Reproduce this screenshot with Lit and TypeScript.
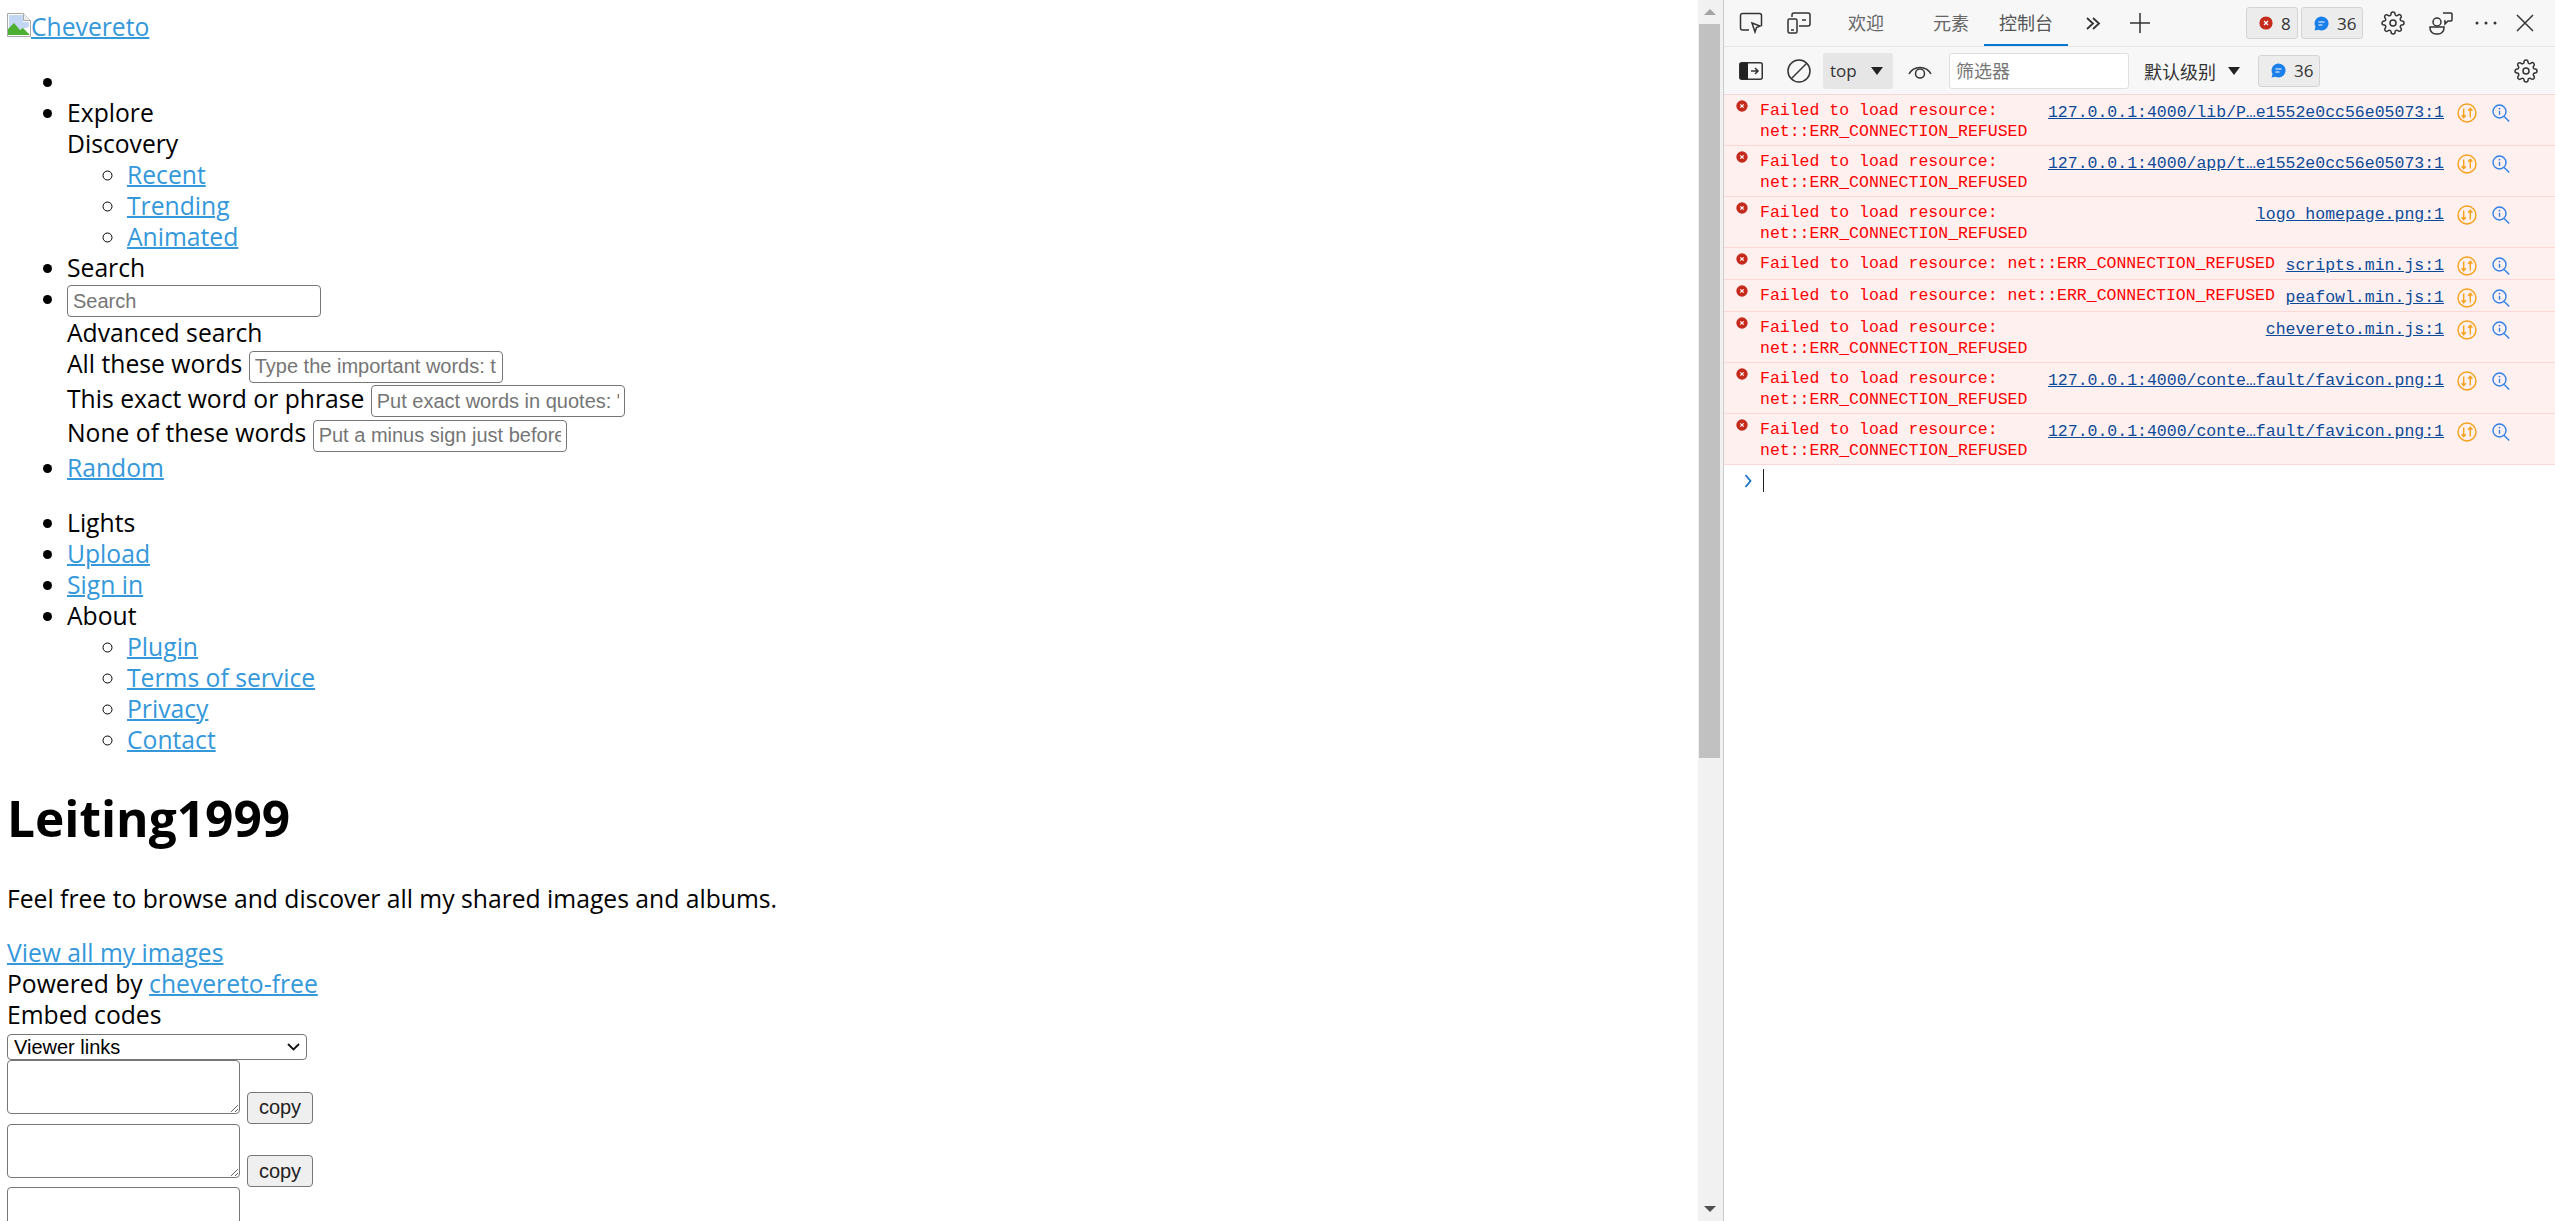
import { LitElement, html, css, svg } from "lit";
import { customElement } from "lit/decorators.js";

const gear = svg`<path d="M12 15a3 3 0 1 0 0-6 3 3 0 0 0 0 6z"/><path d="M19.4 15a1.65 1.65 0 0 0 .33 1.82l.06.06a2 2 0 0 1 0 2.83 2 2 0 0 1-2.83 0l-.06-.06a1.65 1.65 0 0 0-1.82-.33 1.65 1.65 0 0 0-1 1.51V21a2 2 0 0 1-2 2 2 2 0 0 1-2-2v-.09A1.65 1.65 0 0 0 9 19.4a1.65 1.65 0 0 0-1.82.33l-.06.06a2 2 0 0 1-2.83 0 2 2 0 0 1 0-2.83l.06-.06a1.65 1.65 0 0 0 .33-1.82 1.65 1.65 0 0 0-1.51-1H3a2 2 0 0 1-2-2 2 2 0 0 1 2-2h.09A1.65 1.65 0 0 0 4.6 9a1.65 1.65 0 0 0-.33-1.82l-.06-.06a2 2 0 0 1 0-2.83 2 2 0 0 1 2.83 0l.06.06a1.65 1.65 0 0 0 1.82.33H9a1.65 1.65 0 0 0 1-1.51V3a2 2 0 0 1 2-2 2 2 0 0 1 2 2v.09a1.65 1.65 0 0 0 1 1.51 1.65 1.65 0 0 0 1.82-.33l.06-.06a2 2 0 0 1 2.83 0 2 2 0 0 1 0 2.83l-.06.06a1.65 1.65 0 0 0-.33 1.82V9a1.65 1.65 0 0 0 1.51 1H21a2 2 0 0 1 2 2 2 2 0 0 1-2 2h-.09a1.65 1.65 0 0 0-1.51 1z"/>`;

const ic = (w: number, h: number, body: unknown) => html`<svg class="ic" width=${w} height=${h} viewBox="0 0 ${w} ${h}" fill="none" stroke="#333" stroke-width="1.5">${body}</svg>`;
const iGear = html`<svg class="ic" width="24" height="24" viewBox="0 0 24 24" fill="none" stroke="#333" stroke-width="1.5">${gear}</svg>`;
const iErr = (s: number) => html`<svg class="ic" width=${s} height=${s} viewBox="0 0 14 14"><circle cx="7" cy="7" r="6.6" fill="#c42b1c"/><path d="M5 5l4 4M9 5l-4 4" stroke="#fff" stroke-width="1.3"/></svg>`;
const iMsg = html`<svg class="ic" width="15" height="15" viewBox="0 0 15 15"><path d="M7.5.5a7 7 0 1 1-3 13.3L.6 14.6l.9-3.6A7 7 0 0 1 7.5.5z" fill="#1a7fe8"/><path d="M4.5 6h6M4.5 9h4" stroke="#fff" stroke-width="1.2"/></svg>`;
const iNet = html`<svg class="ic" width="20" height="20" viewBox="0 0 20 20" fill="none" stroke="#f7a11a" stroke-width="1.4"><circle cx="10" cy="10" r="9"/><path d="M6.7 5.5v9M4.6 12.2l2.1 2.4 2.1-2.4M13.3 14.5v-9M11.2 7.8l2.1-2.4 2.1 2.4"/></svg>`;
const iLens = html`<svg class="ic" width="18" height="19" viewBox="0 0 18 19" fill="none" stroke="#2f80e8" stroke-width="1.4"><circle cx="7.5" cy="7.5" r="6.5"/><path d="M12.2 12.4l5 5.2"/><path d="M7.5 6.8v4" /><circle cx="7.5" cy="4.6" r=".9" fill="#2f80e8" stroke="none"/></svg>`;

const rows = [
  "127.0.0.1:4000/lib/P…e1552e0cc56e05073:1",
  "127.0.0.1:4000/app/t…e1552e0cc56e05073:1",
  "logo_homepage.png:1",
  "scripts.min.js:1",
  "peafowl.min.js:1",
  "chevereto.min.js:1",
  "127.0.0.1:4000/conte…fault/favicon.png:1",
  "127.0.0.1:4000/conte…fault/favicon.png:1",
];

@customElement("app-root")
export class AppRoot extends LitElement {
  static styles = css`
    :host { display: flex; width: 2555px; height: 1221px; overflow: hidden; background: #fff; }
    .page { width: 1698px; height: 1221px; flex: none; overflow: hidden; box-sizing: border-box; padding: 10.5px 0 0 7px;
      font: 24.7px/31px "Open Sans", sans-serif; color: #000; }
    a { color: #3498db; text-decoration: underline; text-decoration-thickness: 2px; }
    .logo svg { vertical-align: -1px; margin-right: 0; }
    ul { margin: 24px 0; padding: 0 0 0 60px; }
    ul ul { margin: 0; list-style: circle; }
    li { min-height: 31px; }
    input, select, textarea, button { font: 20px "Liberation Sans", sans-serif; box-sizing: border-box; }
    input { width: 254px; height: 32px; border: 1.5px solid #767676; border-radius: 4px; padding: 1px 5px; vertical-align: baseline; margin: 0; }
    input::placeholder { color: #757575; }
    h1 { font-size: 49.6px; line-height: 66px; font-weight: 700; margin: 30px 0 0; }
    p { margin: 32.5px 0 22.5px; }
    .embed { padding-top: 4.5px; }
    .selwrap { position: relative; width: 300px; height: 26px; }
    .selwrap svg { position: absolute; right: 7px; top: 9px; pointer-events: none; }
    .embed select { display: block; appearance: none; width: 300px; height: 26px; border: 1.5px solid #767676; border-radius: 4px; background: #fff; padding: 0 0 0 6px; font-size: 20px; color: #000; }
    .ta { height: 63.5px; white-space: nowrap; }
    textarea { width: 233px; height: 54px; border: 1.5px solid #767676; border-radius: 4px; margin: 0 7px 0 0; padding: 3px; display: inline-block; vertical-align: baseline; }
    button { width: 66px; height: 32px; background: #efefef; border: 1.5px solid #767676; border-radius: 4px; padding: 0; color: #222; }
    .scroll { width: 26px; flex: none; height: 1221px; box-sizing: border-box; background: #f1f1f1; border-right: 1px solid #ccc; display: flex; flex-direction: column; align-items: center; padding: 9px 2px 9px 0; }
    .thumb { width: 21px; height: 734px; background: #c1c1c1; margin-top: 9px; }
    .arr { width: 0; height: 0; border-left: 6px solid transparent; border-right: 6px solid transparent; }
    .arr.up { border-bottom: 6px solid #a3a3a3; }
    .arr.dn { border-top: 6px solid #505050; margin-top: auto; }
    .dev { flex: 1; min-width: 0; display: flex; flex-direction: column; font: 18px "Open Sans", "Noto Sans CJK SC", sans-serif; color: #333; background: #fff; }
    .ic { flex: none; display: block; }
    .bar { height: 47px; flex: none; box-sizing: border-box; display: flex; align-items: center; background: #f7f7f7; }
    .bar1 { padding-left: 15px; border-bottom: 1px solid #e6e6e6; }
    .bar2 { padding-left: 15px; height: 48px; border-bottom: 1px solid #f5d5d8; }
    .tab { color: #666; line-height: 47px; position: relative; white-space: nowrap; }
    .tab.on { color: #555; }
    .tab.on::after { content: ""; position: absolute; left: -15px; right: -15px; bottom: 1px; height: 2px; background: #0078d4; }
    .badge { height: 32px; box-sizing: border-box; display: flex; align-items: center; gap: 8px; padding: 0 9px 0 12px; background: #ececec; border: 1px solid #d4d4d4; border-radius: 3px; font-size: 17px; }
    .sel { width: 70px; height: 36px; box-sizing: border-box; background: #e6e6e6; border-radius: 3px; display: flex; align-items: center; padding-left: 7px; color: #333; font-size: 17px; }
    .tri { width: 0; height: 0; border-left: 6.5px solid transparent; border-right: 6.5px solid transparent; border-top: 8px solid #222; }
    .filter { width: 180px; height: 36px; box-sizing: border-box; background: #fff; border: 1px solid #e0e0e0; border-radius: 3px; padding-left: 6px; line-height: 34px; color: #777; }
    .row { display: flex; align-items: flex-start; background: #fff0f0; border-bottom: 1px solid #ffd6d6; padding: 5px 0 3px 12px; min-height: 32px; box-sizing: border-box; font: 16.5px/21px "Liberation Mono", monospace; flex: none; }
    .row .e { margin: 0 12px 0 0; }
    .msg { flex: 1; min-width: 0; color: #f00; }
    .src { flex: none; color: #0b4a99; text-decoration: underline; margin-top: 2px; margin-left: 6px; white-space: nowrap; font-size: 16.5px; }
    .row .n { margin: 3px 0 0 13px; }
    .row .l { margin: 4px 45px 0 15px; }
    .prompt { display: flex; align-items: center; padding: 3px 0 0 20px; height: 28px; box-sizing: border-box; gap: 11px; }
    .caret { width: 1px; height: 23px; background: #222; }
  `;

  render() {
    return html`
      <div class="page">
        <div class="logo"><a href="#"><svg width="24" height="24" viewBox="0 0 24 24"><path d="M.5.5h16l7 7v16H.5z" fill="#fff" stroke="#a9a9a9"/><path d="M2 2h14v7h6v5L2 20z" fill="#c3d6f3"/><path d="M1 22V16l6-6 6 7 3-2 7 7z" fill="#4caf32"/><path d="M16.5.5v7h7" fill="#eee" stroke="#a9a9a9"/></svg>Chevereto</a></div>
        <ul>
          <li></li>
          <li>Explore<div>Discovery</div>
            <ul><li><a href="#">Recent</a></li><li><a href="#">Trending</a></li><li><a href="#">Animated</a></li></ul>
          </li>
          <li>Search</li>
          <li><input placeholder="Search" />
            <div>Advanced search</div>
            <div>All these words <input placeholder="Type the important words: tree house" /></div>
            <div>This exact word or phrase <input placeholder='Put exact words in quotes: "tree house"' /></div>
            <div>None of these words <input placeholder="Put a minus sign just before words: -tree" /></div>
          </li>
          <li><a href="#">Random</a></li>
        </ul>
        <ul>
          <li>Lights</li>
          <li><a href="#">Upload</a></li>
          <li><a href="#">Sign in</a></li>
          <li>About
            <ul><li><a href="#">Plugin</a></li><li><a href="#">Terms of service</a></li><li><a href="#">Privacy</a></li><li><a href="#">Contact</a></li></ul>
          </li>
        </ul>
        <h1>Leiting1999</h1>
        <p>Feel free to browse and discover all my shared images and albums.</p>
        <div><a href="#">View all my images</a></div>
        <div>Powered by <a href="#">chevereto-free</a></div>
        <div>Embed codes</div>
        <div class="embed">
          <div class="selwrap"><select><option>Viewer links</option></select><svg width="13" height="8" viewBox="0 0 13 8" fill="none" stroke="#111" stroke-width="1.8"><path d="M1 1l5.500 5.500L12 1"/></svg></div>
          <div class="ta"><textarea></textarea><button>copy</button></div>
          <div class="ta"><textarea></textarea><button>copy</button></div>
          <div class="ta"><textarea></textarea></div>
        </div>
      </div>
      <div class="scroll"><div class="arr up"></div><div class="thumb"></div><div class="arr dn"></div></div>
      <div class="dev">
        <div class="bar bar1">
          ${ic(24, 22, svg`<path d="M10 18H3.5A2 2 0 0 1 1.5 16V3.5A2 2 0 0 1 3.500 1.500h17a2 2 0 0 1 2 2V14"/><path d="M13 11l8 3-3.500 1.500L16 20z"/>`)}
          <div style="width:24px"></div>
          ${ic(24, 22, svg`<rect x="1" y="7" width="9" height="14" rx="1.500"/><path d="M4 18h3M5 5V3a2 2 0 0 1 2-2h14a2 2 0 0 1 2 2v9a2 2 0 0 1-2 2h-9M15 8h4"/>`)}
          <span class="tab" style="margin-left:37px">欢迎</span>
          <span class="tab" style="margin-left:49px">元素</span>
          <span class="tab on" style="margin-left:30px">控制台</span>
          <span style="margin-left:32px">${ic(16, 15, svg`<path d="M2 2l6 5.500-6 5.500M8 2l6 5.500-6 5.500" stroke-width="1.800"/>`)}</span>
          <span style="margin-left:28px">${ic(22, 22, svg`<path d="M11 1v20M1 11h20"/>`)}</span>
          <span class="badge" style="margin-left:95px;width:52px">${iErr(14)}8</span>
          <span class="badge" style="margin-left:3px;width:62px">${iMsg}36</span>
          <span style="margin-left:18px">${iGear}</span>
          <span style="margin-left:24px">${ic(24, 24, svg`<circle cx="8" cy="11" r="4"/><path d="M1 16h14v1a6 6 0 0 1-6 6H7a6 6 0 0 1-6-6z"/><path d="M14 2h8a1.500 1.500 0 0 1 1 1v6a1.500 1.500 0 0 1-1 1h-3l-3 3v-3h-1"/>`)}</span>
          <span style="margin-left:21px">${ic(24, 6, svg`<circle cx="3" cy="3" r="1.500" fill="#333" stroke="none"/><circle cx="12" cy="3" r="1.500" fill="#333" stroke="none"/><circle cx="21" cy="3" r="1.500" fill="#333" stroke="none"/>`)}</span>
          <span style="margin-left:18px">${ic(18, 18, svg`<path d="M1 1l16 16M17 1L1 17"/>`)}</span>
        </div>
        <div class="bar bar2">
          ${ic(24, 18, svg`<rect x=".75" y=".75" width="22.500" height="16.500" rx="2"/><path d="M1 2.500a2 2 0 0 1 2-2h6v17H3a2 2 0 0 1-2-2z" fill="#222" stroke="none"/><path d="M12 9h7M16 6l3 3-3 3"/>`)}
          <span style="margin-left:24px">${ic(24, 24, svg`<circle cx="12" cy="12" r="11"/><path d="M4.500 19.500l15-15"/>`)}</span>
          <span class="sel" style="margin-left:12px">top<span class="tri" style="margin-left:14px"></span></span>
          <span style="margin-left:15px">${ic(24, 16, svg`<path d="M1 11a12.500 12.500 0 0 1 22 0"/><circle cx="12" cy="10.500" r="4.500"/>`)}</span>
          <span class="filter" style="margin-left:17px">筛选器</span>
          <span style="margin-left:15px;white-space:nowrap">默认级别</span>
          <span class="tri" style="margin-left:12px"></span>
          <span class="badge" style="margin-left:18px;width:62px">${iMsg}36</span>
          <span style="margin-left:194px">${iGear}</span>
        </div>
        ${rows.map(r => html`<div class="row"><span class="e">${iErr(12)}</span><span class="msg">Failed to load resource: net::ERR_CONNECTION_REFUSED</span><span class="src">${r}</span><span class="n">${iNet}</span><span class="l">${iLens}</span></div>`)}
        <div class="prompt">${ic(8, 14, svg`<path d="M1.500 1l5 6-5 6" stroke="#1a73c8" stroke-width="1.800"/>`)}<span class="caret"></span></div>
      </div>
    `;
  }
}
